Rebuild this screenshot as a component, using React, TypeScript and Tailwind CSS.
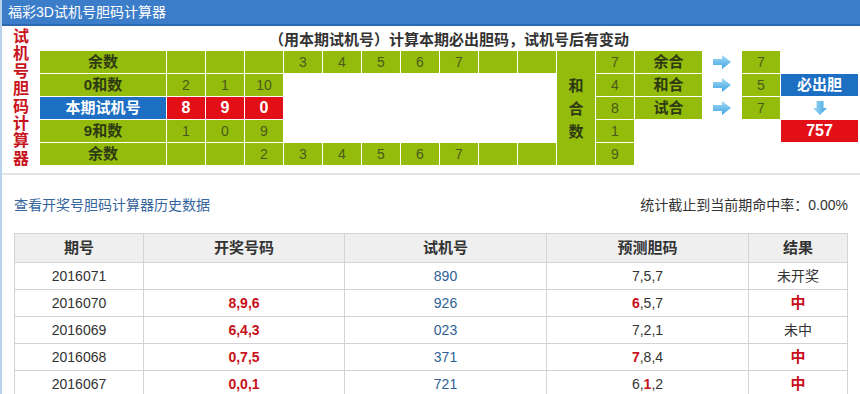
import React from 'react';

const font = { fontFamily: '"Liberation Sans", Arial, "Noto Sans CJK SC", sans-serif' };

function RightArrow() {
  return (
    <svg width="20" height="16" viewBox="0 0 20 16">
      <defs>
        <linearGradient id="ra" x1="0" y1="0" x2="0" y2="1">
          <stop offset="0" stopColor="#a6dcf6" />
          <stop offset="1" stopColor="#3ea3e2" />
        </linearGradient>
      </defs>
      <path d="M1 5 H10 V1 L19 8 L10 15 V11 H1 Z" fill="url(#ra)" />
    </svg>
  );
}

function DownArrow() {
  return (
    <svg width="16" height="16" viewBox="0 0 16 16">
      <defs>
        <linearGradient id="da" x1="0" y1="0" x2="1" y2="0">
          <stop offset="0" stopColor="#a6dcf6" />
          <stop offset="1" stopColor="#3ea3e2" />
        </linearGradient>
      </defs>
      <path d="M4.5 1 H11.5 V8 H15 L8 15 L1 8 H4.5 Z" fill="url(#da)" />
    </svg>
  );
}

const G = ({ children, bold }: { children?: React.ReactNode; bold?: boolean }) => (
  <div
    className={
      'bg-[#93bc0c] flex items-center justify-center ' +
      (bold ? 'text-[15px] font-bold text-[#2e3a12]' : 'text-[14px] text-[#4b5a1c]')
    }
  >
    {children}
  </div>
);

const W = ({ children }: { children?: React.ReactNode }) => (
  <div className="bg-white flex items-center justify-center">{children}</div>
);

const Red = ({ children }: { children: React.ReactNode }) => (
  <div className="bg-[#e20f16] flex items-center justify-center text-white font-bold text-[16px]">{children}</div>
);

const rows = [
  { no: '2016071', win: '', test: '890', pred: [['7'], ['5'], ['7']], res: '未开奖' },
  { no: '2016070', win: '8,9,6', test: '926', pred: [['6', 'r'], ['5'], ['7']], res: '中' },
  { no: '2016069', win: '6,4,3', test: '023', pred: [['7'], ['2'], ['1']], res: '未中' },
  { no: '2016068', win: '0,7,5', test: '371', pred: [['7', 'r'], ['8'], ['4']], res: '中' },
  { no: '2016067', win: '0,0,1', test: '721', pred: [['6'], ['1', 'r'], ['2']], res: '中' },
];

export default function App() {
  return (
    <div className="w-[860px] h-[394px] overflow-hidden bg-white border-l-2 border-[#b9d3ee]" style={font}>
      <div className="h-[26px] bg-[#3c7dca] border-b-2 border-[#2d68b3] text-white text-[14px] pl-[6px] leading-[24px]">
        福彩3D试机号胆码计算器
      </div>

      <div className="flex">
        <div className="w-[38px] pt-[2px] flex flex-col items-center text-[16px] leading-[17.4px] font-bold text-[#c8141c]">
          {'试机号胆码计算器'.split('').map((c, i) => (
            <span key={i}>{c}</span>
          ))}
        </div>
        <div>
          <div className="h-[25px] pt-[4px] text-center text-[15px] font-bold text-[#333] leading-[19px]">
            （用本期试机号）计算本期必出胆码，试机号后有变动
          </div>
          <div className="grid grid-cols-[126px_repeat(10,38px)_38px_38px_67px_38px_38px_77px] grid-rows-[repeat(5,22px)] gap-px bg-white">
            {/* row 1 */}
            <G bold>余数</G>
            <G /><G /><G />
            <G>3</G><G>4</G><G>5</G><G>6</G><G>7</G>
            <G /><G />
            <div className="row-span-5 bg-[#93bc0c] flex flex-col items-center justify-center text-[15px] font-bold text-[#2e3a12] leading-[23px]">
              <span>和</span><span>合</span><span>数</span>
            </div>
            <G>7</G>
            <G bold>余合</G>
            <W><RightArrow /></W>
            <G>7</G>
            <W />
            {/* row 2 */}
            <G bold>0和数</G>
            <G>2</G><G>1</G><G>10</G>
            <div className="col-span-7 row-span-3 bg-white" />
            <G>4</G>
            <G bold>和合</G>
            <W><RightArrow /></W>
            <G>5</G>
            <div className="bg-[#1d6fc3] flex items-center justify-center text-white font-bold text-[15px]">必出胆</div>
            {/* row 3 */}
            <div className="bg-[#1d6fc3] flex items-center justify-center text-white font-bold text-[15px]">本期试机号</div>
            <Red>8</Red><Red>9</Red><Red>0</Red>
            <G>8</G>
            <G bold>试合</G>
            <W><RightArrow /></W>
            <G>7</G>
            <W><DownArrow /></W>
            {/* row 4 */}
            <G bold>9和数</G>
            <G>1</G><G>0</G><G>9</G>
            <G>1</G>
            <W /><W /><W />
            <Red>757</Red>
            {/* row 5 */}
            <G bold>余数</G>
            <G /><G /><G>2</G>
            <G>3</G><G>4</G><G>5</G><G>6</G><G>7</G>
            <G /><G />
            <G>9</G>
            <W /><W /><W /><W />
          </div>
        </div>
      </div>

      <div className="mt-[6px] border-t-2 border-[#dfe5e8]">
        <div className="mt-[20px] mx-[12px] flex justify-between items-center text-[14px] leading-[20px]">
          <span className="text-[#35659c]">查看开奖号胆码计算器历史数据</span>
          <span className="text-[#333]">统计截止到当前期命中率：0.00%</span>
        </div>
        <table className="mt-[18px] ml-[12px] w-[833px] border-collapse text-[14px] text-[#333] table-fixed">
          <colgroup>
            <col className="w-[129px]" />
            <col className="w-[201px]" />
            <col className="w-[202px]" />
            <col className="w-[202px]" />
            <col className="w-[99px]" />
          </colgroup>
          <thead>
            <tr className="h-[29px] bg-[#efefef]">
              {['期号', '开奖号码', '试机号', '预测胆码', '结果'].map((h) => (
                <th key={h} className="border border-[#d3d3d3] font-bold text-[15px] leading-[18px]">{h}</th>
              ))}
            </tr>
          </thead>
          <tbody>
            {rows.map((r) => (
              <tr key={r.no} className="h-[27px] text-center">
                <td className="border border-[#d3d3d3]">{r.no}</td>
                <td className="border border-[#d3d3d3] text-[#c8101a] font-bold">{r.win}</td>
                <td className="border border-[#d3d3d3] text-[#2f5f96]">{r.test}</td>
                <td className="border border-[#d3d3d3]">
                  {r.pred.map((p, i) => (
                    <React.Fragment key={i}>
                      {i > 0 && ','}
                      <span className={p[1] ? 'text-[#c8101a] font-bold' : ''}>{p[0]}</span>
                    </React.Fragment>
                  ))}
                </td>
                <td className={'border border-[#d3d3d3] ' + (r.res === '中' ? 'text-[#c8101a] font-bold text-[15px] leading-[18px]' : '')}>
                  {r.res}
                </td>
              </tr>
            ))}
          </tbody>
        </table>
      </div>
    </div>
  );
}
